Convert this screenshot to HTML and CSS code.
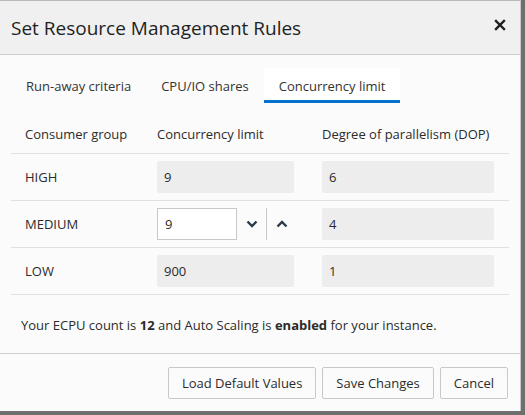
FILE: index.html
```html
<!DOCTYPE html>
<html lang="en">
<head>
  <meta charset="UTF-8" />
  <title>Set Resource Management Rules</title>
  <link rel="stylesheet" href="styles.css">
</head>
<body>
  <div class="dialog">
    <div class="dialog-header">
      <h2>Set Resource Management Rules</h2>
      <button class="close" aria-label="Close">
        <svg width="12" height="12" viewBox="0 0 12 12">
          <path d="M2 2 L10 10 M10 2 L2 10" stroke="#1f1f1f" stroke-width="2.4" stroke-linecap="square" />
        </svg>
      </button>
    </div>

    <div class="dialog-body">
      <div class="tabs">
        <div class="tab">Run-away criteria</div>
        <div class="tab">CPU/IO shares</div>
        <div class="tab active">Concurrency limit</div>
      </div>

      <div class="table">
        <div class="row head">
          <div>Consumer group</div>
          <div>Concurrency limit</div>
          <div>Degree of parallelism (DOP)</div>
        </div>
        <div class="row">
          <div>HIGH</div>
          <div><div class="field readonly short">9</div></div>
          <div><div class="field readonly">6</div></div>
        </div>
        <div class="row">
          <div>MEDIUM</div>
          <div class="spinner">
            <div class="field edit">9</div>
            <button class="spin">
              <svg width="12" height="8" viewBox="0 0 12 8"><path d="M1.5 1.5 L6 6 L10.5 1.5" fill="none" stroke="#2b3a4a" stroke-width="2.4" /></svg>
            </button>
            <span class="sep"></span>
            <button class="spin">
              <svg width="12" height="8" viewBox="0 0 12 8"><path d="M1.5 6.5 L6 2 L10.5 6.5" fill="none" stroke="#2b3a4a" stroke-width="2.4" /></svg>
            </button>
          </div>
          <div><div class="field readonly">4</div></div>
        </div>
        <div class="row">
          <div>LOW</div>
          <div><div class="field readonly short">900</div></div>
          <div><div class="field readonly">1</div></div>
        </div>
      </div>

      <p class="note">Your ECPU count is <strong>12</strong> and Auto Scaling is <strong>enabled</strong> for your instance.</p>
    </div>

    <div class="dialog-footer">
      <button class="btn">Load Default Values</button>
      <button class="btn">Save Changes</button>
      <button class="btn">Cancel</button>
    </div>
  </div>
</body>
</html>
```

FILE: styles.css
```css
body {
  margin: 0;
  padding: 0;
  background: #6e6e6e;
  font-family: 'Open Sans', 'Noto Sans', sans-serif;
  font-size: 13px;
  color: #2b2b2b;
}

.dialog {
  width: 520px;
  height: 410px;
  background: #fbfbfb;
  border-top: 1px solid #b8b8b8;
  border-right: 1px solid #c8c8c8;
  display: flex;
  flex-direction: column;
}

.dialog-header {
  height: 53px;
  background: #f0f0f0;
  border-bottom: 1px solid #cfcfcf;
  display: flex;
  align-items: center;
  justify-content: space-between;
  padding: 0 14px 0 11px;
}

.dialog-header h2 {
  margin: 0;
  font-weight: 400;
  font-size: 19px;
  color: #1f1f1f;
}

.close {
  border: none;
  background: none;
  padding: 0;
  margin-top: -6px;
  display: flex;
}

.dialog-body {
  flex: 1;
  padding: 13px 11px 0;
}

.tabs {
  display: flex;
}

.tab {
  padding: 9px 15px 0;
  height: 23px;
  color: #333;
}

.tab.active {
  background: #fff;
  border-bottom: 3px solid #0572ce;
}

.table {
  margin-top: 8px;
}

.row {
  display: grid;
  grid-template-columns: 132px 165px 1fr;
  padding: 0 14px;
  height: 46px;
  align-items: center;
  border-bottom: 1px solid #e0e0e0;
}

.row.head {
  height: 32px;
  padding-bottom: 10px;
  align-items: end;
}

.field {
  height: 32px;
  box-sizing: border-box;
  padding: 0 7px;
  display: flex;
  align-items: center;
  width: 172px;
  border-radius: 2px;
}

.field.readonly {
  background: #ededed;
}

.field.short {
  width: 137px;
}

.spinner {
  display: flex;
  align-items: center;
}

.field.edit {
  width: 80px;
  background: #fff;
  border: 1px solid #c8c8c8;
  border-radius: 0;
}

.spin {
  border: none;
  background: none;
  width: 29px;
  height: 32px;
  padding: 0;
  display: flex;
  align-items: center;
  justify-content: center;
}

.sep {
  width: 1px;
  height: 32px;
  background: #c8c8c8;
}

.note {
  margin: 21px 0 0 10px;
}

.dialog-footer {
  border-top: 1px solid #cfcfcf;
  padding: 13px 12px 12px;
  display: flex;
  justify-content: flex-end;
  gap: 6px;
}

.btn {
  font-family: inherit;
  font-size: 13px;
  color: #2b2b2b;
  background: #fbfbfb;
  border: 1px solid #c8c8c8;
  border-radius: 2px;
  height: 32px;
  padding: 0 13px;
}
```
